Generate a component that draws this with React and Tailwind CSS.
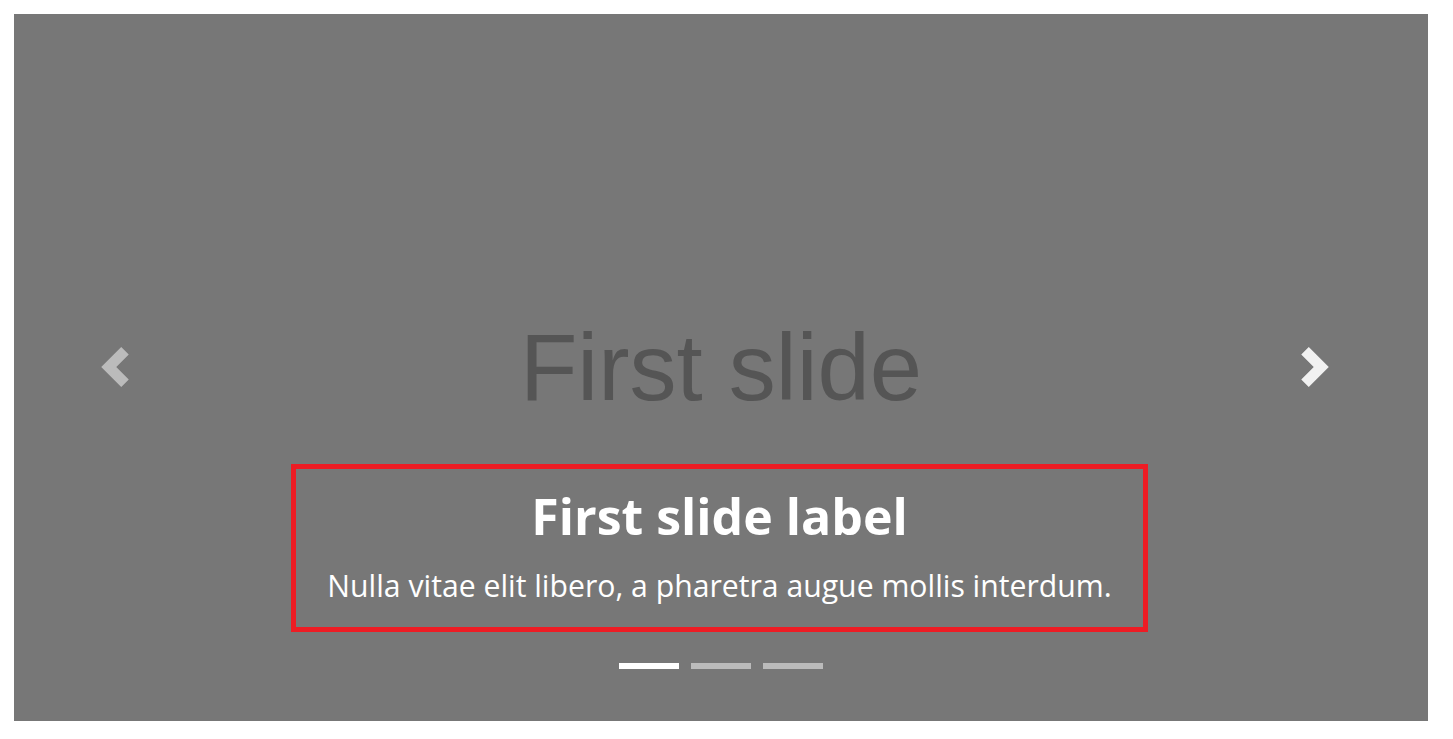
export default function App() {
  return (
    <div className="w-[1453px] h-[739px] bg-white pt-[14px] pl-[14px]">
      <div className="relative w-[1414px] h-[707px] bg-[#777777] overflow-hidden">
        <div className="w-full h-full flex items-center justify-center">
          <span
            className="text-[94px] leading-none text-[#555555]"
            style={{ fontFamily: '"Liberation Sans", Arial, sans-serif' }}
          >
            First slide
          </span>
        </div>

        <button className="absolute left-[81px] top-[333px] w-[40px] h-[40px] opacity-50">
          <svg viewBox="0 0 8 8" width="40" height="40" fill="#ffffff">
            <path d="M5.25 0l-4 4 4 4 1.5-1.5-2.5-2.5 2.5-2.5-1.5-1.5z" />
          </svg>
        </button>
        <button className="absolute left-[1281px] top-[333px] w-[40px] h-[40px] opacity-90">
          <svg viewBox="0 0 8 8" width="40" height="40" fill="#ffffff">
            <path d="M2.75 0l-1.5 1.5 2.5 2.5-2.5 2.5 1.5 1.5 4-4-4-4z" />
          </svg>
        </button>

        <div
          className="absolute left-[277px] top-[450px] w-[857px] h-[168px] border-[5px] border-[#ed1c24] flex flex-col items-center text-white text-center"
          style={{ fontFamily: '"Open Sans", "Noto Sans", sans-serif' }}
        >
          <h5 className="mt-[17px] text-[50px] leading-[1.2] font-bold">First slide label</h5>
          <p className="mt-[17px] text-[30.2px] leading-[1.5]">
            Nulla vitae elit libero, a pharetra augue mollis interdum.
          </p>
        </div>

        <div className="absolute left-0 right-0 bottom-[52px] flex justify-center gap-[12px]">
          <span className="block w-[60px] h-[6px] bg-white" />
          <span className="block w-[60px] h-[6px] bg-white opacity-50" />
          <span className="block w-[60px] h-[6px] bg-white opacity-50" />
        </div>
      </div>
    </div>
  );
}
